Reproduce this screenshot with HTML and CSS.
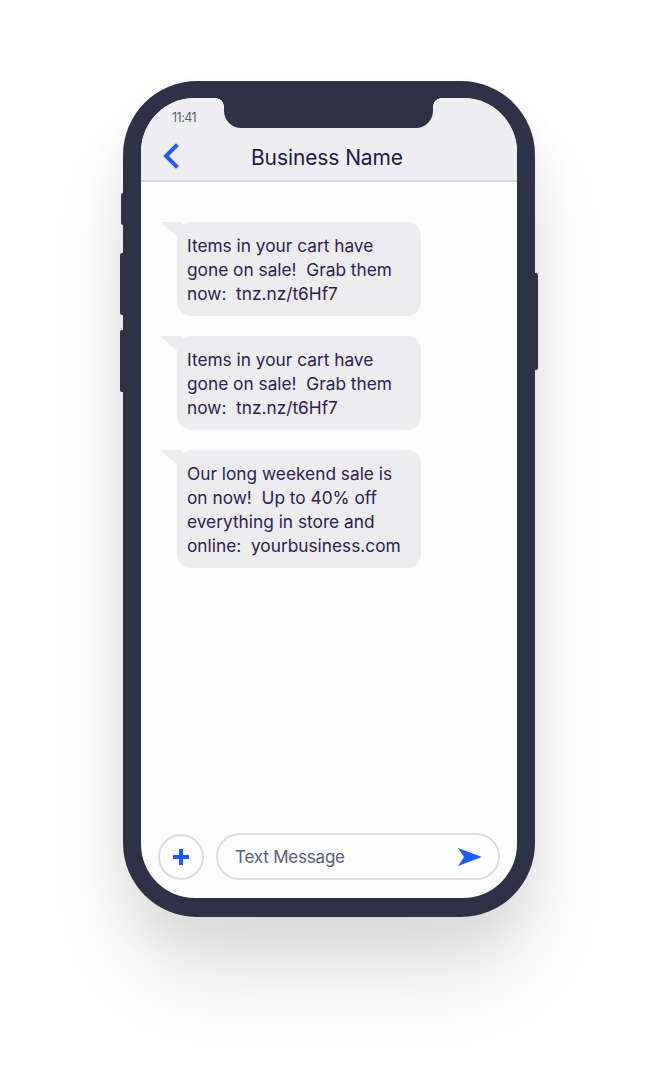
FILE: index.html
```html
<!DOCTYPE html>
<html lang="en">
<head>
<meta charset="utf-8">
<title>Business Name</title>
<link rel="stylesheet" href="styles.css">
</head>
<body>
<div class="stage">
  <div class="phone">
    <span class="btn btn-l1"></span>
    <span class="btn btn-l2"></span>
    <span class="btn btn-l3"></span>
    <span class="btn btn-r1"></span>
    <div class="screen">
      <div class="notch"></div>
      <header class="header">
        <div class="status">11:41</div>
        <div class="titlebar">
          <svg class="back" width="20" height="26" viewBox="0 0 20 26"><path d="M15 3 L5 13 L15 23" fill="none" stroke="#1c5cff" stroke-width="4" stroke-linecap="square" stroke-linejoin="miter"/></svg>
          <h1 class="title">Business Name</h1>
        </div>
      </header>
      <main class="messages">
        <div class="bubble">Items in your cart have<br>gone on sale!&nbsp; Grab them<br>now:&nbsp; tnz.nz/t6Hf7</div>
        <div class="bubble">Items in your cart have<br>gone on sale!&nbsp; Grab them<br>now:&nbsp; tnz.nz/t6Hf7</div>
        <div class="bubble">Our long weekend sale is<br>on now!&nbsp; Up to 40% off<br>everything in store and<br>online:&nbsp; yourbusiness.com</div>
      </main>
      <footer class="composer">
        <div class="plus">
          <svg width="20" height="20" viewBox="0 0 20 20"><path d="M10 2 V18 M2 10 H18" stroke="#1c5cff" stroke-width="4"/></svg>
        </div>
        <div class="field">
          <span class="placeholder">Text Message</span>
          <svg class="send" width="26" height="20" viewBox="0 0 26 20"><path d="M1 1 L25 10 L1 19 L7 10 Z" fill="#1c5cff"/></svg>
        </div>
      </footer>
    </div>
  </div>
</div>
</body>
</html>
```
FILE: styles.css
```css
* { box-sizing: border-box; }
html, body { margin: 0; padding: 0; background: #ffffff; }
body { width: 659px; height: 1078px; overflow: hidden; font-family: Inter, "Noto Sans", sans-serif; }

.stage { padding: 81px 0 0 123px; }

.phone {
  position: relative;
  width: 412px;
  height: 836px;
  background: #2e3246;
  border-radius: 74px;
  padding: 17px 18px 19px 18px;
  box-shadow: 0 65px 90px rgba(0, 0, 0, 0.11), 0 25px 45px rgba(0, 0, 0, 0.05);
}

.btn { position: absolute; background: #2e3246; border-radius: 2px; }
.btn-l1 { left: -2px; top: 112px; width: 4px; height: 32px; }
.btn-l2 { left: -3px; top: 172px; width: 5px; height: 62px; }
.btn-l3 { left: -3px; top: 249px; width: 5px; height: 62px; }
.btn-r1 { right: -3px; top: 192px; width: 5px; height: 97px; }

.screen {
  position: relative;
  width: 100%;
  height: 100%;
  border-radius: 54px;
  overflow: hidden;
  background: #fdfdfd;
  display: flex;
  flex-direction: column;
}

.notch {
  position: absolute;
  left: 83px;
  top: 0;
  width: 209px;
  height: 30px;
  background: #2e3246;
  border-radius: 0 0 17px 17px;
  z-index: 2;
}
.notch::before, .notch::after {
  content: "";
  position: absolute;
  top: 0;
  width: 8px;
  height: 8px;
  background: radial-gradient(circle at 0 100%, transparent 7.5px, #2e3246 8px);
}
.notch::before { left: -8px; }
.notch::after { right: -8px; background: radial-gradient(circle at 100% 100%, transparent 7.5px, #2e3246 8px); }

.header {
  height: 84px;
  background: #efeff3;
  border-bottom: 2px solid #d2d2dc;
  display: flex;
  flex-direction: column;
}

.status {
  padding: 12px 0 0 31px;
  height: 38px;
  font-size: 12.5px;
  letter-spacing: -0.5px;
  color: #5e6072;
  line-height: 16px;
}

.titlebar {
  position: relative;
  display: flex;
  align-items: center;
  justify-content: center;
  height: 40px;
  padding-top: 3px;
}
.back { position: absolute; left: 20px; top: 7px; }
.title {
  margin: 0;
  font-size: 21px;
  font-weight: 400;
  color: #1f1a4a;
  letter-spacing: -0.1px;
  line-height: 26px;
  padding-right: 4px;
}

.messages {
  flex: 1;
  padding: 40px 0 0 36px;
  display: flex;
  flex-direction: column;
  align-items: flex-start;
  gap: 20px;
}

.bubble {
  position: relative;
  width: 244px;
  background: #ededf0;
  border-radius: 14px;
  padding: 12px 6px 10px 10px;
  font-size: 17.3px;
  line-height: 24px;
  color: #2b2250;
  letter-spacing: 0;
  white-space: nowrap;
}
.bubble::before {
  content: "";
  position: absolute;
  left: -17px;
  top: 0;
  width: 22px;
  height: 19px;
  background: #ededf0;
  clip-path: polygon(0 0, 100% 0, 100% 100%);
}

.composer {
  display: flex;
  align-items: center;
  gap: 12px;
  padding: 0 17px 18px 17px;
}

.plus {
  width: 46px;
  height: 46px;
  border-radius: 50%;
  border: 2px solid #dcdcdf;
  display: flex;
  align-items: center;
  justify-content: center;
  flex: none;
}

.field {
  flex: 1;
  height: 47px;
  border: 2px solid #dcdcdf;
  border-radius: 24px;
  display: flex;
  align-items: center;
  justify-content: space-between;
  padding: 0 14px 0 17px;
}
.placeholder {
  font-size: 17px;
  color: #5a6079;
  letter-spacing: -0.2px;
}
.send { display: block; margin-right: 1px; }
```
